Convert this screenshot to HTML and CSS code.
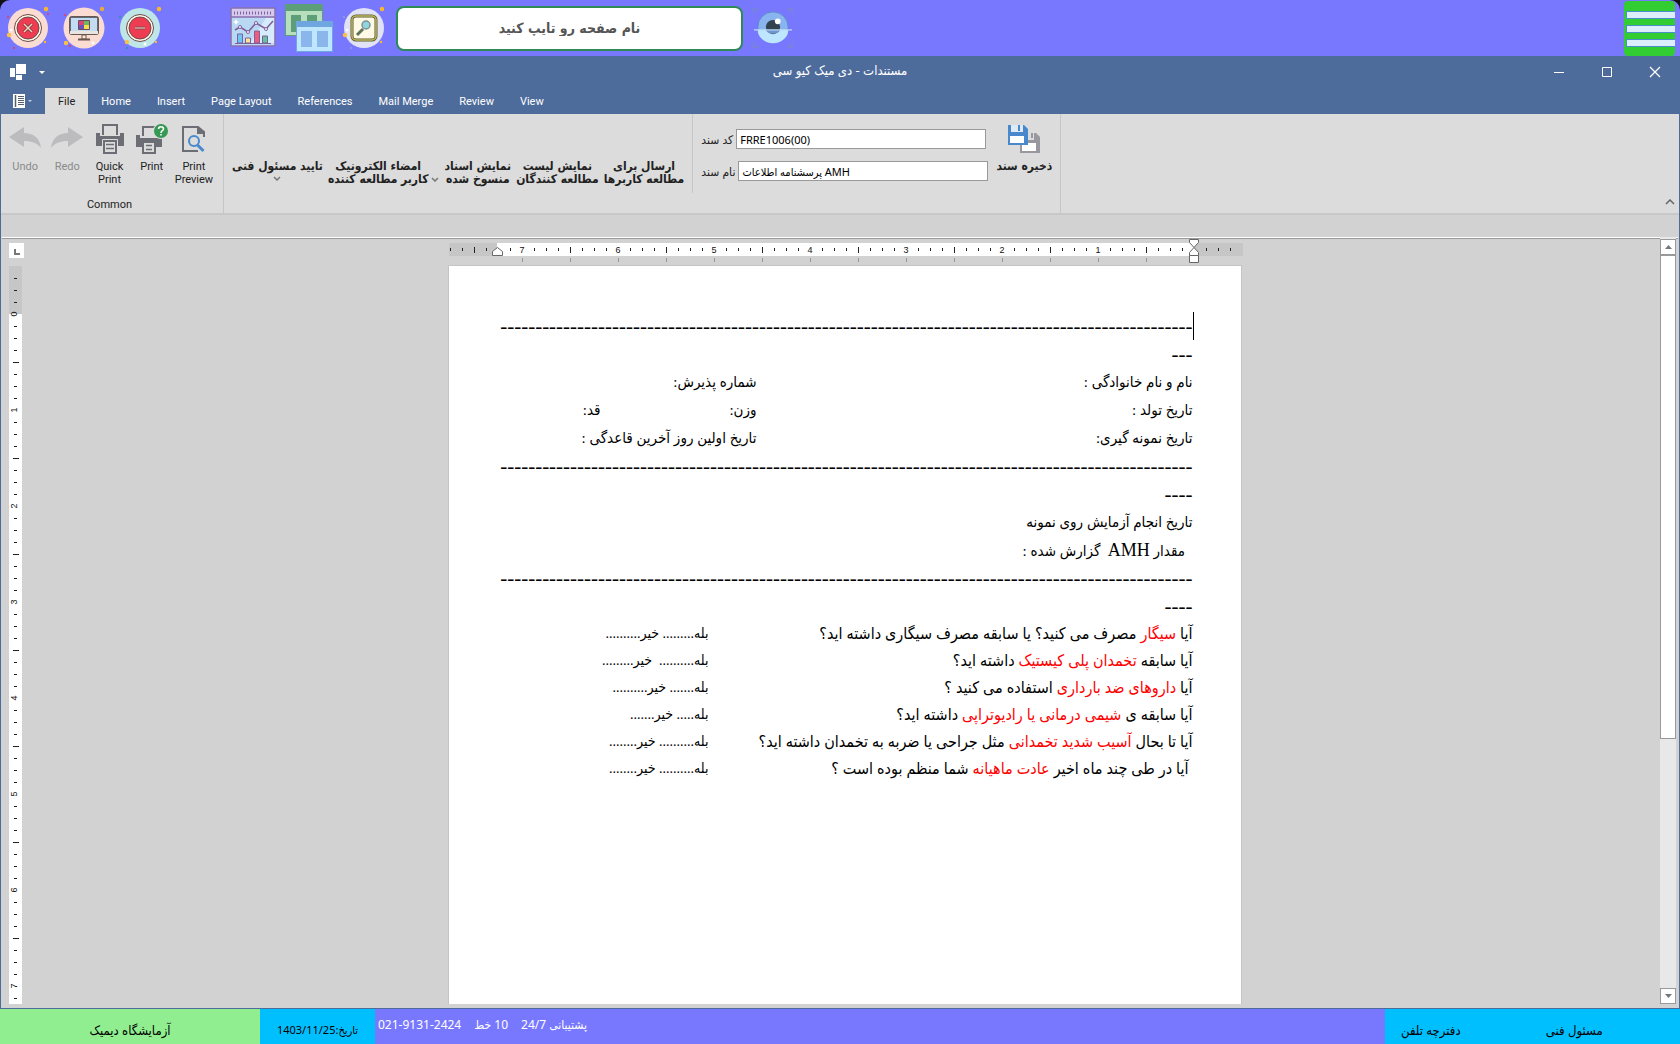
FILE: index.html
```html
<!DOCTYPE html>
<html lang="fa">
<head>
    <meta charset="UTF-8">
    <meta name="viewport" content="width=device-width, initial-scale=1.0">
    <title>مستندات - دی میک کیو سی</title>
    <link rel="stylesheet" href="styles.css">
</head>
<body>
    <header class="app-bar">
        <div class="app-actions">
            <button class="round-btn" aria-label="Close">
                <svg width="44" height="44" viewBox="0 0 44 44">
                    <circle cx="22" cy="22" r="20" fill="#fadcd2"/>
                    <circle cx="22" cy="22" r="13.5" fill="#fff8e8" stroke="#6b4a4a"/>
                    <circle cx="22" cy="22" r="11" fill="#ee3d52" stroke="#6b4a4a"/>
                    <path d="M18 18l8 8M26 18l-8 8" stroke="#7a3038" stroke-width="3"/>
                    <path d="M18 18l8 8M26 18l-8 8" stroke="#e8dcc0" stroke-width="1.5"/>
                    <circle cx="40" cy="3" r="2.2" fill="#fbb72a"/>
                    <circle cx="3" cy="29" r="2.2" fill="#fcc044"/>
                    <circle cx="5" cy="24" r="1.3" fill="#fff"/>
                    <circle cx="42" cy="8" r="1" fill="#ee3d52"/>
                    <circle cx="2" cy="11" r="1" fill="#ee3d52"/>
                    <circle cx="8" cy="42" r="1" fill="#ee3d52"/>
                    <circle cx="39" cy="36" r="1.2" fill="#fbb72a"/>
                </svg>
            </button>
            <button class="round-btn" aria-label="Desktop">
                <svg width="44" height="44" viewBox="0 0 44 44">
                    <circle cx="22" cy="22" r="20.5" fill="#fadcd2"/>
                    <rect x="7.5" y="10.5" width="29" height="18" rx="2" fill="#5f6b78" stroke="#6b5550"/>
                    <rect x="9" y="12" width="26" height="13" fill="#c4dcf2"/>
                    <rect x="8" y="25" width="28" height="3" fill="#e9e4e0"/>
                    <path d="M20 29h4v4h-4z" fill="#fff0d8" stroke="#6b5550"/>
                    <path d="M16 33.5h12" stroke="#6b5550" stroke-width="2"/>
                    <path d="M17 15h5v4h-5z" fill="#d9457b"/>
                    <path d="M22 15h5v4h-5z" fill="#6cb85a"/>
                    <path d="M17 19h5v4h-5z" fill="#6a52b8"/>
                    <path d="M22 19h5v4h-5z" fill="#f4df4e"/>
                    <path d="M16.500 14.500h11v9h-11z" fill="none" stroke="#6b4a5a"/>
                    <circle cx="40" cy="3" r="2.2" fill="#e5ab3a"/>
                    <circle cx="4" cy="37" r="2.2" fill="#fcc044"/>
                    <circle cx="31" cy="37" r="1.5" fill="#fff"/>
                    <circle cx="3" cy="9" r="1" fill="#ee3d52"/>
                    <circle cx="8" cy="40" r="1" fill="#ee3d52"/>
                </svg>
            </button>
            <button class="round-btn" aria-label="Minimize">
                <svg width="44" height="44" viewBox="0 0 44 44">
                    <circle cx="22" cy="22" r="20" fill="#bfe6e6"/>
                    <circle cx="22" cy="22" r="13.5" fill="#fff8e8" stroke="#6b4a4a"/>
                    <circle cx="22" cy="22" r="11" fill="#ee3d52" stroke="#6b4a4a"/>
                    <path d="M17 22h10" stroke="#8a4a4a" stroke-width="3"/>
                    <path d="M17 22h10" stroke="#c9a9a0" stroke-width="1.5"/>
                    <circle cx="41" cy="3" r="2.2" fill="#fbb72a"/>
                    <circle cx="9" cy="36" r="2.2" fill="#fcc044"/>
                    <circle cx="27" cy="38" r="1.5" fill="#fff"/>
                    <circle cx="2" cy="11" r="1" fill="#1d9a9a"/>
                    <circle cx="9" cy="42" r="1" fill="#1d9a9a"/>
                    <circle cx="38" cy="36" r="1.2" fill="#fbb72a"/>
                </svg>
            </button>
        </div>
        <div class="app-tools">
            <button class="tool-btn" aria-label="Charts">
                <svg width="46" height="46" viewBox="0 0 46 46">
                    <rect x="1" y="3" width="44" height="38" rx="1" fill="#b9d8f4" stroke="#8a6fae" stroke-width="1.5"/>
                    <rect x="2" y="4" width="42" height="8" fill="#d6c9ee"/>
                    <path d="M1 12h44" stroke="#8a6fae" stroke-width="1.5"/>
                    <path d="M4 8h38" stroke="#80609c" stroke-width="3" stroke-dasharray="1 2"/>
                    <path d="M20 38L36 13h8v25z" fill="#d6ebfb"/>
                    <path d="M5 25l5-3 8 5 8-9 10 6 7-8" fill="none" stroke="#80609c" stroke-width="1.5"/>
                    <g fill="#fff" stroke="#80609c"><circle cx="10" cy="22" r="1.5"/><circle cx="18" cy="27" r="1.5"/><circle cx="26" cy="18" r="1.5"/><circle cx="36" cy="24" r="1.5"/></g>
                    <path d="M7.5 38v-9h5v9z" fill="#6dc6f5" stroke="#80609c"/>
                    <path d="M15.5 38v-5h5v5z" fill="#fbe69a" stroke="#80609c"/>
                    <path d="M24.5 38V26h5v12z" fill="#ef5b7c" stroke="#80609c"/>
                    <path d="M32.5 38v-7h5v7z" fill="#5fc79b" stroke="#80609c"/>
                    <path d="M5 38.5h36" stroke="#80609c"/>
                    <path d="M6 14l1 2 2 1-2 1-1 2-1-2-2-1 2-1z" fill="#fff"/>
                </svg>
            </button>
            <button class="tool-btn" aria-label="Windows">
                <svg width="48" height="50" viewBox="0 0 48 50">
                    <path d="M0 1h38v32H0z" fill="#5b9e78"/>
                    <path d="M1 8h36v24H1z" fill="#b7dfbd"/>
                    <path d="M6 12h10v17H6zM22 12h10v17H22z" fill="#5b9e78"/>
                    <path d="M11 18h37v31H11z" fill="#70a6e0"/>
                    <path d="M12 24h35v24H12z" fill="#bfe6ff"/>
                    <path d="M16 28h11v16H16zM32 28h11v16H32z" fill="#8bb6ec"/>
                </svg>
            </button>
            <button class="tool-btn" aria-label="Search">
                <svg width="44" height="44" viewBox="0 0 44 44">
                    <circle cx="22" cy="22" r="20" fill="#e2e2f7"/>
                    <rect x="10" y="10" width="24" height="24" rx="4" fill="#fff9e8" stroke="#5f5a2c" stroke-width="3"/>
                    <rect x="10" y="10" width="24" height="24" rx="4" fill="none" stroke="#b9b860" stroke-width="1.5"/>
                    <path d="M21 23l-6 6" stroke="#5f7258" stroke-width="3"/>
                    <circle cx="24" cy="19" r="4" fill="#8fd6df" stroke="#7d9294" stroke-width="1.5"/>
                    <circle cx="40" cy="3" r="2.2" fill="#fbb72a"/>
                    <circle cx="3" cy="29" r="2.2" fill="#fcc044"/>
                    <circle cx="5" cy="24" r="1.3" fill="#fff"/>
                    <circle cx="2" cy="11" r="1" fill="#9a9ad0"/>
                    <circle cx="9" cy="42" r="1" fill="#9a9ad0"/>
                    <circle cx="39" cy="36" r="1.2" fill="#fbb72a"/>
                </svg>
            </button>
        </div>
        <input class="page-search" type="text" dir="rtl" placeholder="نام صفحه رو تایپ کنید" aria-label="نام صفحه">
        <button class="eye-btn" aria-label="Preview">
            <svg width="40" height="42" viewBox="0 0 42 42">
                <path d="M1 6V1h5M36 1h5v5M1 36v5h5M36 41h5v-5" fill="none" stroke="#7787cf" stroke-width="1.5"/>
                <circle cx="21" cy="20" r="16" fill="#8ab4f0" stroke="#5a86c8"/>
                <path d="M5 23a16 14 0 0 0 32 0z" fill="#bfe6ff"/>
                <circle cx="21" cy="20" r="7.5" fill="#33424f"/>
                <path d="M13.5 23a8 6 0 0 0 15 0z" fill="#7096cc"/>
                <circle cx="26" cy="14" r="3" fill="#fff"/>
                <path d="M1 23h40" stroke="#bcdcf8" stroke-width="1.5"/>
            </svg>
        </button>
        <button class="menu-btn" aria-label="Menu">
            <span class="menu-line"></span>
            <span class="menu-line"></span>
            <span class="menu-line"></span>
        </button>
    </header>

    <main class="window">
        <div class="title-bar">
            <div class="quick-access">
                <svg width="16" height="16" viewBox="0 0 16 16" fill="#fff"><path d="M6 0h10v10H6zM0 4h5v9H0zM6 11h6v5H6z"/></svg>
                <svg width="6" height="3" viewBox="0 0 6 3" fill="#fff"><path d="M0 0h6L3 3z"/></svg>
            </div>
            <h1 class="window-title" dir="rtl">مستندات - دی میک کیو سی</h1>
            <div class="window-controls">
                <button aria-label="Minimize window"><svg width="12" height="12"><path d="M1 6.5h10" stroke="#fff"/></svg></button>
                <button aria-label="Maximize window"><svg width="12" height="12"><path d="M1.5 1.5h9v9h-9z" fill="none" stroke="#fff"/></svg></button>
                <button aria-label="Close window"><svg width="12" height="12"><path d="M1 1l10 10M11 1L1 11" stroke="#fff" stroke-width="1.3"/></svg></button>
            </div>
        </div>

        <nav class="tabs">
            <button class="file-menu" aria-label="Application menu">
                <svg width="19" height="14" viewBox="0 0 19 14">
                    <path d="M0 0h12v14H0z" fill="#fff"/>
                    <path d="M2.5 1v12" stroke="#55606e" stroke-width="1.5"/>
                    <path d="M5 2.5h6M5 4.5h6M5 6.5h6M5 8.5h6M5 10.5h6" stroke="#55606e"/>
                    <path d="M15 6h4l-2 2z" fill="#c9d3e2"/>
                </svg>
            </button>
            <button class="tab active">File</button>
            <button class="tab">Home</button>
            <button class="tab">Insert</button>
            <button class="tab">Page Layout</button>
            <button class="tab">References</button>
            <button class="tab">Mail Merge</button>
            <button class="tab">Review</button>
            <button class="tab">View</button>
        </nav>

        <div class="ribbon">
            <section class="ribbon-group common">
                <div class="ribbon-items">
                    <button class="ribbon-btn" disabled>
                        <svg width="32" height="32" viewBox="0 0 32 32" fill="#bcbcbe"><path d="M0 14L15 4v6c9 0 16 5 17 15-4-5-9-7-17-7v6z"/></svg>
                        <span>Undo</span>
                    </button>
                    <button class="ribbon-btn" disabled>
                        <svg width="32" height="32" viewBox="0 0 32 32" fill="#bcbcbe"><path d="M32 14L17 4v6C8 10 1 15 0 25c4-5 9-7 17-7v6z"/></svg>
                        <span>Redo</span>
                    </button>
                    <button class="ribbon-btn">
                        <svg width="32" height="32" viewBox="0 0 32 32">
                            <path d="M9 12V2h14v10" fill="none" stroke="#6d6d76" stroke-width="2"/>
                            <path d="M2 10h4v3h20v-3h4v13H2z" fill="#6d6d76"/>
                            <path d="M10 18h12v12H10z" fill="#dcdcdc" stroke="#6d6d76" stroke-width="2"/>
                            <path d="M8.5 24v-7.5h15V24" fill="none" stroke="#dcdcdc"/>
                            <path d="M12 21.5h8M12 25.5h8" stroke="#6d6d76" stroke-width="1.5"/>
                        </svg>
                        <span>Quick<br>Print</span>
                    </button>
                    <button class="ribbon-btn">
                        <svg width="32" height="32" viewBox="0 0 32 32">
                            <path d="M7 13V4h12" fill="none" stroke="#6d6d76" stroke-width="2"/>
                            <path d="M0 12h4v3h22v9H0z" fill="#6d6d76"/>
                            <path d="M7 19h12v11H7z" fill="#dcdcdc" stroke="#6d6d76" stroke-width="2"/>
                            <path d="M10 22.5h6M10 26.5h6" stroke="#6d6d76" stroke-width="1.5"/>
                            <circle cx="25" cy="8" r="8" fill="#dcdcdc"/>
                            <circle cx="25" cy="8" r="7" fill="#359953"/>
                            <path d="M22.5 6c0-3 5-3 5 0 0 2-2.5 1.5-2.5 4M25 11v1.5" fill="none" stroke="#fff" stroke-width="1.5"/>
                        </svg>
                        <span>Print</span>
                    </button>
                    <button class="ribbon-btn">
                        <svg width="32" height="32" viewBox="0 0 32 32">
                            <path d="M26 14v-5l-6-5H5v24h15" fill="none" stroke="#6d6d76" stroke-width="2"/>
                            <path d="M19 3l8 8h-8z" fill="#6d6d76"/>
                            <circle cx="16" cy="18" r="5" fill="none" stroke="#4a88ce" stroke-width="2"/>
                            <path d="M19.5 22l6 6" stroke="#4a88ce" stroke-width="3"/>
                        </svg>
                        <span>Print<br>Preview</span>
                    </button>
                </div>
                <h2 class="group-title">Common</h2>
            </section>

            <section class="ribbon-group actions">
                <button class="text-btn">
                    <span dir="rtl">تایید مسئول فنی</span>
                    <svg width="8" height="5"><path d="M1 1l3 3 3-3" fill="none" stroke="#777" stroke-width="1.5"/></svg>
                </button>
                <button class="text-btn with-arrow">
                    <span dir="rtl">امضاء الکترونیک<br>کاربر مطالعه کننده</span>
                    <svg width="8" height="5"><path d="M1 1l3 3 3-3" fill="none" stroke="#777" stroke-width="1.5"/></svg>
                </button>
                <button class="text-btn"><span dir="rtl">نمایش اسناد<br>منسوخ شده</span></button>
                <button class="text-btn"><span dir="rtl">نمایش لیست<br>مطالعه کنندگان</span></button>
                <button class="text-btn"><span dir="rtl">ارسال برای<br>مطالعه کاربرها</span></button>
            </section>

            <section class="ribbon-group document">
                <div class="fields">
                    <div class="field">
                        <label for="doc-code" dir="rtl">کد سند</label>
                        <input id="doc-code" type="text" value="FRRE1006(00)">
                    </div>
                    <div class="field">
                        <label for="doc-name" dir="rtl">نام سند</label>
                        <input id="doc-name" type="text" value="پرسشنامه اطلاعات AMH">
                    </div>
                </div>
                <button class="text-btn save-btn">
                    <svg width="32" height="32" viewBox="0 0 32 32">
                        <path d="M12 10h16l4 4v16H12z" fill="#98989e"/>
                        <path d="M14 20h14v8H14z" fill="#fff"/>
                        <path d="M20 10h6v7h-6z" fill="#dcdcdc"/>
                        <path d="M23 10h2v5h-2z" fill="#98989e"/>
                        <path d="M0 2h16l4 4v16H0z" fill="#4a88ce"/>
                        <path d="M3 2h12v7H3z" fill="#dfeaf5"/>
                        <path d="M10 2h2v6h-2z" fill="#4a88ce"/>
                        <path d="M2 13h14v7H2z" fill="#fff"/>
                    </svg>
                    <span dir="rtl">ذخیره سند</span>
                </button>
            </section>
            <button class="collapse-btn" aria-label="Collapse ribbon">
                <svg width="10" height="6"><path d="M1 5l4-4 4 4" fill="none" stroke="#666" stroke-width="1.5"/></svg>
            </button>
        </div>

        <div class="editor">
            <div class="ruler-side">
                <button class="tab-stop" aria-label="Tab stop"><svg width="15" height="15"><path d="M6 6v5h5" fill="none" stroke="#777" stroke-width="2"/></svg></button>
                <svg class="v-ruler" width="13" height="100%">
                    <defs>
                        <pattern id="v-ticks" x="0" y="48" width="13" height="96" patternUnits="userSpaceOnUse">
                            <path d="M5 12.5h3M5 24.5h3M5 36.5h3M4 48.5h6M5 60.5h3M5 72.5h3M5 84.5h3" stroke="#222"/>
                        </pattern>
                    </defs>
                    <rect width="13" height="100%" fill="#fff"/>
                    <rect width="13" height="48" fill="#c6c6c6"/>
                    <rect y="6" width="13" height="100%" fill="url(#v-ticks)"/>
                    <g class="ruler-digits">
                        <text transform="translate(8 48) rotate(-90)">0</text>
                        <text transform="translate(8 144) rotate(-90)">1</text>
                        <text transform="translate(8 240) rotate(-90)">2</text>
                        <text transform="translate(8 336) rotate(-90)">3</text>
                        <text transform="translate(8 432) rotate(-90)">4</text>
                        <text transform="translate(8 528) rotate(-90)">5</text>
                        <text transform="translate(8 624) rotate(-90)">6</text>
                        <text transform="translate(8 720) rotate(-90)">7</text>
                    </g>
                </svg>
            </div>

            <div class="canvas">
                <svg class="h-ruler" width="794" height="26" viewBox="0 0 794 26">
                    <defs>
                        <pattern id="h-ticks" x="73" y="0" width="96" height="26" patternUnits="userSpaceOnUse">
                            <path d="M12.5 9v3M24.5 9v3M36.5 9v3M48.5 8v6M60.5 9v3M72.5 9v3M84.5 9v3" stroke="#222"/>
                        </pattern>
                        <pattern id="h-stops" x="25" y="0" width="48" height="26" patternUnits="userSpaceOnUse">
                            <path d="M.5 19v4" stroke="#999"/>
                        </pattern>
                    </defs>
                    <rect y="4" width="794" height="13" fill="#c6c6c6"/>
                    <rect x="48" y="4" width="697" height="13" fill="#fff"/>
                    <rect width="788" height="26" fill="url(#h-ticks)"/>
                    <rect x="73" width="660" height="26" fill="url(#h-stops)"/>
                    <g class="ruler-digits">
                        <text x="73" y="14">7</text>
                        <text x="169" y="14">6</text>
                        <text x="265" y="14">5</text>
                        <text x="361" y="14">4</text>
                        <text x="457" y="14">3</text>
                        <text x="553" y="14">2</text>
                        <text x="649" y="14">1</text>
                    </g>
                    <g fill="#fff" stroke="#666">
                        <path d="M43.5 16.5v-4l5-4 5 4v4z"/>
                        <path d="M740.5.5h9v3l-4.500 5-4.500-5z"/>
                        <path d="M740.5 16.5v-3l4.500-5 4.500 5v3z"/>
                        <path d="M740.5 16.5h9v7h-9z"/>
                    </g>
                </svg>

                <article class="page" dir="rtl">
                    <div class="doc-block person">
                        <p class="dashes caret">---------------------------------------------------------------------------------------------------</p>
                        <p class="dashes">---</p>
                        <p class="cols"><span>نام و نام خانوادگی :</span><span>شماره پذیرش:</span></p>
                        <p class="cols"><span>تاریخ تولد :</span><span>وزن:</span><span>قد:</span></p>
                        <p class="cols"><span>تاریخ نمونه گیری:</span><span>تاریخ اولین روز آخرین قاعدگی :</span></p>
                    </div>
                    <div class="doc-block result">
                        <p class="dashes">---------------------------------------------------------------------------------------------------</p>
                        <p class="dashes">----</p>
                        <p>تاریخ انجام آزمایش روی نمونه</p>
                        <p>&nbsp; مقدار <span class="latin">AMH</span>&nbsp; گزارش شده :</p>
                        <p class="dashes">---------------------------------------------------------------------------------------------------</p>
                        <p class="dashes">----</p>
                    </div>
                    <div class="doc-block questions">
                        <p><span>آیا <em>سیگار</em> مصرف می کنید؟ یا سابقه مصرف سیگاری داشته اید؟</span><span class="answer">بله......... خیر..........</span></p>
                        <p><span>آیا سابقه <em>تخمدان پلی کیستیک</em> داشته اید؟</span><span class="answer">بله..........&nbsp; خیر.........</span></p>
                        <p><span>آیا <em>داروهای ضد بارداری</em> استفاده می کنید ؟</span><span class="answer">بله....... خیر..........</span></p>
                        <p><span>آیا سابقه ی <em>شیمی درمانی یا رادیوتراپی</em> داشته اید؟</span><span class="answer">بله..... خیر.......</span></p>
                        <p><span>آیا تا بحال <em>آسیب شدید تخمدانی</em> مثل جراحی یا ضربه به تخمدان داشته اید؟</span><span class="answer">بله.......... خیر........</span></p>
                        <p><span>&nbsp;آیا در طی چند ماه اخیر <em>عادت ماهیانه</em> شما منظم بوده است ؟</span><span class="answer">بله.......... خیر........</span></p>
                    </div>
                </article>
            </div>

            <div class="scrollbar">
                <button aria-label="Scroll up"><svg width="7" height="4"><path d="M0 4h7L3.5 0z" fill="#777"/></svg></button>
                <div class="track"><div class="thumb"></div></div>
                <button aria-label="Scroll down"><svg width="7" height="4"><path d="M0 0h7L3.5 4z" fill="#777"/></svg></button>
            </div>
        </div>
    </main>

    <footer class="status-bar">
        <div class="lab-name" dir="rtl">آزمایشگاه دیمیک</div>
        <div class="date" dir="rtl">تاریخ:1403/11/25</div>
        <div class="support"><span>021-9131-2424</span><span dir="rtl">10 خط</span><span dir="rtl">پشتیبانی 24/7</span></div>
        <div class="links">
            <a href="#">دفترچه تلفن</a>
            <a href="#">مسئول فنی</a>
        </div>
    </footer>
</body>
</html>
```
FILE: styles.css
```css
* {
    box-sizing: border-box;
}
html {
    background: #111;
}
body {
    display: flex;
    flex-direction: column;
    height: 100vh;
    margin: 0;
    overflow: hidden;
    font-family: "Noto Sans", "DejaVu Sans Condensed", sans-serif;
    font-size: 11px;
    color: #222;
}
button {
    font: inherit;
    color: inherit;
    background: none;
    border: none;
    padding: 0;
    cursor: pointer;
}
svg {
    display: block;
    flex: none;
}
h1, h2, p {
    margin: 0;
    font-size: inherit;
    font-weight: normal;
}

/* top bar */
.app-bar {
    display: flex;
    align-items: center;
    flex: none;
    height: 56px;
    padding: 0 5px 0 6px;
    background: #7878ff;
    border-radius: 10px 10px 0 0;
}
.app-actions {
    display: flex;
    gap: 12px;
}
.app-tools {
    display: flex;
    align-items: center;
    gap: 9px;
    margin-left: 68px;
}
.page-search {
    width: 347px;
    height: 45px;
    margin: 0 10px;
    border: 2px solid #2e8b57;
    border-radius: 8px;
    background: #fff;
    font-family: "DejaVu Sans Condensed", sans-serif;
    font-size: 14px;
    font-weight: bold;
    text-align: center;
}
.page-search::placeholder {
    color: #555;
    opacity: 1;
}
.menu-btn {
    display: flex;
    flex-direction: column;
    justify-content: center;
    gap: 6px;
    width: 51px;
    height: 55px;
    margin-left: auto;
    padding: 2px 0 0 2px;
    background: #32cd32;
    border-radius: 4px;
}
.menu-line {
    height: 8px;
    background: #dceefc;
    border: 1px solid #4a90c8;
    border-right: none;
}

/* document window */
.window {
    display: flex;
    flex-direction: column;
    flex: 1;
    min-height: 0;
    padding: 0 1px;
    background: #4e6c9b;
    border-bottom: 1px solid #4e6c9b;
}
.title-bar {
    display: grid;
    grid-template-columns: 1fr auto 1fr;
    align-items: center;
    height: 32px;
    color: #fff;
}
.window-title {
    font-size: 13px;
    line-height: 28px;
    height: 32px;
}
.quick-access {
    display: flex;
    align-items: center;
    gap: 13px;
    padding-left: 9px;
}
.window-controls {
    display: flex;
    justify-content: flex-end;
}
.window-controls button {
    display: grid;
    place-items: center;
    width: 48px;
    height: 32px;
}
.tabs {
    display: flex;
    height: 26px;
    color: #fff;
    font-family: Roboto, sans-serif;
}
.file-menu {
    width: 44px;
    padding-left: 12px;
}
.tab {
    padding: 0 13px;
}
.tab.active {
    background: #dcdcdc;
    color: #222;
}

/* ribbon */
.ribbon {
    display: flex;
    height: 101px;
    background: #dcdcdc;
    border-bottom: 2px solid #c8c8c8;
}
.ribbon-group {
    border-right: 1px solid #c6c6c6;
}
.common {
    width: 223px;
    padding: 9px 8px 0 3px;
    font-family: Roboto, sans-serif;
}
.ribbon-items {
    display: flex;
    height: 75px;
}
.ribbon-btn {
    display: flex;
    flex-direction: column;
    align-items: center;
    gap: 5px;
    flex: 1;
    line-height: 13px;
}
.ribbon-btn:disabled {
    color: #8a8a8a;
}
.group-title {
    line-height: 14px;
    text-align: center;
}
.text-btn {
    display: flex;
    flex-direction: column;
    align-items: center;
    gap: 3px;
    font-family: "DejaVu Sans Condensed", sans-serif;
    font-size: 12px;
    font-weight: bold;
    line-height: 13px;
    white-space: nowrap;
}
.actions {
    display: flex;
    align-items: flex-start;
    gap: 5px;
    margin-bottom: 20px;
    padding: 46px 8px 0 8px;
}
.with-arrow {
    flex-direction: row;
    align-items: flex-end;
}
.with-arrow svg {
    margin-bottom: 4px;
}
.common, .document {
    flex: none;
}
.document {
    display: flex;
    align-items: flex-start;
    padding: 9px 8px 0 8px;
}
.fields {
    display: flex;
    flex-direction: column;
    gap: 12px;
    padding-top: 6px;
}
.field {
    display: flex;
    align-items: center;
    gap: 3px;
}
.field label {
    font-size: 12px;
}
.field input {
    width: 250px;
    height: 20px;
    padding: 0 3px;
    border: 1px solid #999;
    background: #fff;
    font: inherit;
}
.save-btn {
    gap: 5px;
    padding-left: 8px;
}
.collapse-btn {
    align-self: flex-end;
    margin: 0 4px 8px auto;
}

/* editor */
.editor {
    display: flex;
    flex: 1;
    min-height: 0;
    padding: 0 2px 2px 7px;
    background: #d2d2d2;
    border: 1px solid #d2d2d2;
    border-width: 22px 1px 2px 1px;
    box-shadow: inset 0 1px #fff, inset 0 2px #999;
}
.ruler-side {
    display: flex;
    flex-direction: column;
    gap: 8px;
    padding-top: 6px;
    margin-right: 5px;
}
.tab-stop {
    background: #fff;
    flex: none;
}
.v-ruler {
    flex: 1;
    min-height: 0;
}
.ruler-digits {
    font-family: "Liberation Sans", sans-serif;
    font-size: 9px;
    text-anchor: middle;
    fill: #111;
}
.canvas {
    flex: 1;
    display: flex;
    flex-direction: column;
    align-items: center;
    padding-top: 2px;
    overflow: hidden;
}
.h-ruler {
    margin-left: 2px;
}
.page {
    flex: 1;
    width: 794px;
    padding: 46px 48px;
    background: #fff;
    border: 1px solid #c4c4c4;
    border-bottom: none;
    color: #000;
    font-family: "Liberation Serif", "DejaVu Sans Condensed", serif;
    font-size: 15px;
    white-space: nowrap;
}
.doc-block p {
    height: 28px;
    line-height: 28px;
}
.doc-block .dashes {
    font-size: 21px;
    direction: ltr;
    text-align: right;
}
.caret {
    box-shadow: 1px 0 #000;
}
.latin {
    font-size: 18px;
}
.cols {
    display: grid;
    grid-template-columns: 436px 156px auto;
    justify-content: start;
}
.questions p {
    display: grid;
    grid-template-columns: 484px auto;
    justify-content: start;
    height: 27px;
    line-height: 27px;
    font-size: 16px;
}
.questions em {
    font-style: normal;
    color: #f00;
}
.questions .answer {
    font-size: 14px;
}

/* vertical scroll bar */
.scrollbar {
    display: flex;
    flex-direction: column;
    width: 16px;
    padding-top: 2px;
    background: #e8e8e8;
}
.scrollbar button {
    display: grid;
    place-items: center;
    height: 16px;
    border: 1px solid #999;
    background: #fff;
}
.track {
    flex: 1;
}
.thumb {
    height: 66%;
    border: 1px solid #999;
    background: #fff;
}

/* status bar */
.status-bar {
    display: flex;
    flex: none;
    height: 35px;
    background: #7878ff;
    font-size: 13px;
    color: #000;
}
.lab-name, .date {
    display: grid;
    place-items: center;
    padding-top: 6px;
    white-space: nowrap;
}
.lab-name {
    width: 260px;
    background: #90ee90;
}
.date {
    width: 115px;
    background: #00bfff;
    font-size: 11px;
}
.support {
    display: flex;
    flex: 1;
    gap: 13px;
    padding: 7px 3px;
    color: #fff;
    font-size: 12px;
}
.links {
    display: flex;
    align-items: center;
    gap: 85px;
    width: 295px;
    padding: 6px 0 0 16px;
    background: #00bfff;
}
.links a {
    color: #000;
    text-decoration: none;
}
```
